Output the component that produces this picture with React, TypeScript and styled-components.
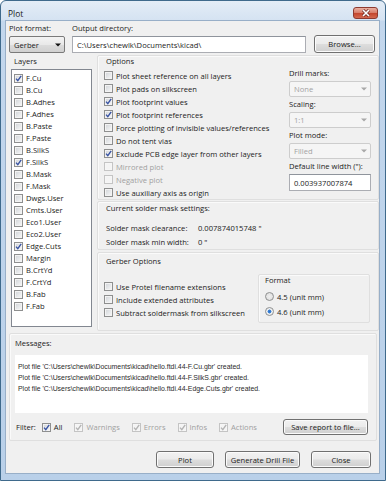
import React from "react";
import styled, { createGlobalStyle } from "styled-components";

/*
 * KICAD "PLOT" DIALOG (WIN7 LOOK)
 */

const GlobalStyle = createGlobalStyle`
  html, body { margin: 0; padding: 0; background: #ffffff; }
  body {
    font-family: "Open Sans", "Liberation Sans", sans-serif;
    font-size: 7.6px;
    color: #1b1b1b;
  }
  * { box-sizing: border-box; }
`;

const layers: [string, boolean][] = [
    ["F.Cu", true], ["B.Cu", false], ["B.Adhes", false], ["F.Adhes", false],
    ["B.Paste", false], ["F.Paste", false], ["B.SilkS", false], ["F.SilkS", true],
    ["B.Mask", false], ["F.Mask", false], ["Dwgs.User", false], ["Cmts.User", false],
    ["Eco1.User", false], ["Eco2.User", false], ["Edge.Cuts", true], ["Margin", false],
    ["B.CrtYd", false], ["F.CrtYd", false], ["B.Fab", false], ["F.Fab", false],
];

const options = [
    { label: "Plot sheet reference on all layers" },
    { label: "Plot pads on silkscreen" },
    { label: "Plot footprint values", checked: true },
    { label: "Plot footprint references", checked: true },
    { label: "Force plotting of invisible values/references" },
    { label: "Do not tent vias" },
    { label: "Exclude PCB edge layer from other layers", checked: true },
    { label: "Mirrored plot", disabled: true },
    { label: "Negative plot", disabled: true },
    { label: "Use auxiliary axis as origin" },
];

const messages = [
    "Plot file 'C:\\Users\\chewlk\\Documents\\kicad\\hello.ftdi.44-F.Cu.gbr' created.",
    "Plot file 'C:\\Users\\chewlk\\Documents\\kicad\\hello.ftdi.44-F.SilkS.gbr' created.",
    "Plot file 'C:\\Users\\chewlk\\Documents\\kicad\\hello.ftdi.44-Edge.Cuts.gbr' created.",
];

const filters = [
    { label: "All", disabled: false },
    { label: "Warnings", disabled: true },
    { label: "Errors", disabled: true },
    { label: "Infos", disabled: true },
    { label: "Actions", disabled: true },
];

const Check = ({ checked, disabled }: { checked?: boolean; disabled?: boolean }) => (
    <Box $disabled={disabled}>
        {checked && (
            <svg width="7" height="7" viewBox="0 0 7 7">
                <path d="M1 3.6 L2.8 5.6 L6.2 0.8" fill="none"
                    stroke={disabled ? "#b4b4b4" : "#3a55a4"} strokeWidth="1.4" />
            </svg>
        )}
    </Box>
);

const Arrow = ({ disabled }: { disabled?: boolean }) => (
    <svg width="6" height="4" viewBox="0 0 6 4">
        <path d="M0 0.5 L6 0.5 L3 3.5 Z" fill={disabled ? "#a8a8a8" : "#111"} />
    </svg>
);

const App = () => {
    return (
        <>
            <GlobalStyle />
            <Window>
                <TitleBar>
                    <Title>Plot</Title>
                    <CloseBtn>
                        <svg width="10" height="8" viewBox="0 0 10 8">
                            <path d="M2 1 L8 7 M8 1 L2 7" stroke="#6b2a22" strokeWidth="3" />
                            <path d="M2 1 L8 7 M8 1 L2 7" stroke="#ffffff" strokeWidth="1.6" />
                        </svg>
                    </CloseBtn>
                </TitleBar>
                <Client>
                    <TopRow>
                        <FormatCol>
                            <FieldLabel>Plot format:</FieldLabel>
                            <Select>
                                <span>Gerber</span>
                                <Arrow />
                            </Select>
                        </FormatCol>
                        <OutputCol>
                            <FieldLabel>Output directory:</FieldLabel>
                            <TextBox>C:\Users\chewlk\Documents\kicad\</TextBox>
                        </OutputCol>
                        <Button $w={61} $h={18} $ml={8}>Browse...</Button>
                    </TopRow>

                    <MainRow>
                        <LayersCol>
                            <FieldLabel $indent={3}>Layers</FieldLabel>
                            <ListBox>
                                {layers.map(([name, on]) => (
                                    <CheckRow key={name} $h={12}>
                                        <Check checked={on} />
                                        {name}
                                    </CheckRow>
                                ))}
                            </ListBox>
                        </LayersCol>

                        <RightCol>
                            <Group>
                                <GroupLabel $top={0}>Options</GroupLabel>
                                <OptionsBody>
                                    <CheckList $pad={1}>
                                        {options.map((o) => (
                                            <CheckRow key={o.label} $h={13} $disabled={o.disabled}>
                                                <Check checked={o.checked} disabled={o.disabled} />
                                                {o.label}
                                            </CheckRow>
                                        ))}
                                    </CheckList>
                                    <SideCol>
                                        <SideField>
                                            <FieldLabel>Drill marks:</FieldLabel>
                                            <Select $disabled>
                                                <span>None</span>
                                                <Arrow disabled />
                                            </Select>
                                        </SideField>
                                        <SideField>
                                            <FieldLabel>Scaling:</FieldLabel>
                                            <Select $disabled>
                                                <span>1:1</span>
                                                <Arrow disabled />
                                            </Select>
                                        </SideField>
                                        <SideField>
                                            <FieldLabel>Plot mode:</FieldLabel>
                                            <Select $disabled>
                                                <span>Filled</span>
                                                <Arrow disabled />
                                            </Select>
                                        </SideField>
                                        <SideField>
                                            <FieldLabel>Default line width ("):</FieldLabel>
                                            <TextBox $h={17}>0.003937007874</TextBox>
                                        </SideField>
                                    </SideCol>
                                </OptionsBody>
                            </Group>

                            <Group $gap={1}>
                                <GroupLabel $top={1}>Current solder mask settings:</GroupLabel>
                                <SolderRows>
                                    <SolderRow><span>Solder mask clearance:</span><span>0.007874015748 "</span></SolderRow>
                                    <SolderRow><span>Solder mask min width:</span><span>0 "</span></SolderRow>
                                </SolderRows>
                            </Group>

                            <Group $gap={2} $bottom={7}>
                                <GroupLabel $top={3}>Gerber Options</GroupLabel>
                                <GerberBody>
                                    <CheckList $pad={6}>
                                        <CheckRow $h={13}><Check />Use Protel filename extensions</CheckRow>
                                        <CheckRow $h={13}><Check />Include extended attributes</CheckRow>
                                        <CheckRow $h={13}><Check />Subtract soldermask from silkscreen</CheckRow>
                                    </CheckList>
                                    <FormatBox>
                                        <FormatLabel>Format</FormatLabel>
                                        <RadioRow><Radio />4.5 (unit mm)</RadioRow>
                                        <RadioRow><Radio $on />4.6 (unit mm)</RadioRow>
                                    </FormatBox>
                                </GerberBody>
                            </Group>
                        </RightCol>
                    </MainRow>

                    <MessagesGroup>
                        <GroupLabel $top={4} $left={0}>Messages:</GroupLabel>
                        <MessageArea>
                            {messages.map((m) => <MessageLine key={m}>{m}</MessageLine>)}
                        </MessageArea>
                        <FilterRow>
                            <FilterTitle>Filter:</FilterTitle>
                            {filters.map((f) => (
                                <CheckRow key={f.label} $h={16} $disabled={f.disabled}>
                                    <Check checked disabled={f.disabled} />
                                    {f.label}
                                </CheckRow>
                            ))}
                            <Spacer />
                            <Button $w={85} $h={16}>Save report to file...</Button>
                        </FilterRow>
                    </MessagesGroup>

                    <ButtonRow>
                        <Button $w={58} $h={17}>Plot</Button>
                        <Button $w={75} $h={17}>Generate Drill File</Button>
                        <Button $w={60} $h={17}>Close</Button>
                    </ButtonRow>
                </Client>
            </Window>
        </>
    );
}

const Window = styled.div`
  width: 386px;
  height: 481px;
  display: flex;
  flex-direction: column;
  border: 1px solid #3f6a8c;
  border-radius: 6px 6px 0 0;
  background: linear-gradient(180deg, #e4edf7 0px, #d5e3f2 19px, #c3d7ed 20px, #b9d0e9 100%);
  overflow: hidden;
`;

const TitleBar = styled.div`
  height: 19px;
  flex: none;
  display: flex;
  align-items: flex-start;
  justify-content: space-between;
  padding: 0 7px 0 7px;
`;

const Title = styled.div`
  margin-top: 7px;
  font-size: 8.4px;
  line-height: 11px;
  color: #1a1a1a;
`;

const CloseBtn = styled.div`
  margin-top: 6px;
  width: 25px;
  height: 12px;
  display: flex;
  align-items: center;
  justify-content: center;
  border: 1px solid #8d3a30;
  border-radius: 3px;
  background: linear-gradient(180deg, #eab1a2 0%, #d9806d 45%, #c4472f 55%, #d4684f 100%);
`;

const Client = styled.div`
  flex: 1;
  margin: 0 5px 6px 4px;
  border: 1px solid #98afc8;
  background: #f0f0f0;
  display: flex;
  flex-direction: column;
`;

const TopRow = styled.div`
  display: flex;
  align-items: flex-end;
  padding: 2px 4px 0 3px;
`;

const FieldLabel = styled.div<{ $indent?: number }>`
  line-height: 11px;
  margin-bottom: 2px;
  padding-left: ${(p) => p.$indent ?? 0}px;
  white-space: nowrap;
`;

const FormatCol = styled.div`
  width: 56px;
  display: flex;
  flex-direction: column;
`;

const OutputCol = styled.div`
  flex: 1;
  margin-left: 7px;
  display: flex;
  flex-direction: column;
`;

const Select = styled.div<{ $disabled?: boolean }>`
  height: ${(p) => (p.$disabled ? 16 : 17)}px;
  display: flex;
  align-items: center;
  justify-content: space-between;
  padding: 0 3px 0 4px;
  border: 1px solid ${(p) => (p.$disabled ? "#cdcdcd" : "#7a7a7a")};
  border-radius: 2px;
  color: ${(p) => (p.$disabled ? "#a3a3a3" : "#1b1b1b")};
  background: ${(p) => (p.$disabled
        ? "#f5f5f5"
        : "linear-gradient(180deg, #f3f3f3 0%, #e9e9e9 50%, #dcdcdc 51%, #d0d0d0 100%)")};
`;

const TextBox = styled.div<{ $h?: number }>`
  height: ${(p) => p.$h ?? 17}px;
  display: flex;
  align-items: center;
  padding-left: 4px;
  background: #ffffff;
  border: 1px solid #abadb3;
  border-top-color: #8f949c;
  white-space: nowrap;
  overflow: hidden;
`;

const Button = styled.div<{ $w: number; $h: number; $ml?: number }>`
  width: ${(p) => p.$w}px;
  height: ${(p) => p.$h}px;
  margin-left: ${(p) => p.$ml ?? 0}px;
  flex: none;
  display: flex;
  align-items: center;
  justify-content: center;
  border: 1px solid #707070;
  border-radius: 3px;
  box-shadow: inset 0 0 0 1px #fbfbfb;
  background: linear-gradient(180deg, #f2f2f2 0%, #ebebeb 48%, #dddddd 52%, #cfcfcf 100%);
  white-space: nowrap;
`;

const MainRow = styled.div`
  display: flex;
  align-items: flex-start;
  margin-top: 2px;
`;

const LayersCol = styled.div`
  width: 81px;
  margin-left: 5px;
  padding-top: 1px;
  display: flex;
  flex-direction: column;
`;

const ListBox = styled.div`
  height: 258px;
  background: #ffffff;
  border: 1px solid #828790;
  padding: 2px 0 0 2px;
`;

const CheckRow = styled.div<{ $h: number; $disabled?: boolean }>`
  height: ${(p) => p.$h}px;
  display: flex;
  align-items: center;
  gap: 3px;
  white-space: nowrap;
  color: ${(p) => (p.$disabled ? "#a0a0a0" : "inherit")};
`;

const Box = styled.span<{ $disabled?: boolean }>`
  flex: none;
  width: 9px;
  height: 9px;
  display: flex;
  align-items: center;
  justify-content: center;
  border: 1px solid ${(p) => (p.$disabled ? "#c4c4c4" : "#8e8f8f")};
  box-shadow: inset 0 0 0 1px ${(p) => (p.$disabled ? "#f6f6f6" : "#f3f3f3")};
  background: ${(p) => (p.$disabled
        ? "#f4f4f4"
        : "linear-gradient(135deg, #cfd2d6 0%, #e6e8ea 55%, #f8f8f8 100%)")};
`;

const RightCol = styled.div`
  flex: 1;
  margin-left: 5px;
  display: flex;
  flex-direction: column;
`;

const Group = styled.div<{ $gap?: number; $bottom?: number }>`
  margin-top: ${(p) => p.$gap ?? 0}px;
  padding-bottom: ${(p) => p.$bottom ?? 0}px;
  border: 1px solid #dfdfdf;
  border-radius: 2px;
  box-shadow: inset 1px 1px 0 #fafafa;
`;

const GroupLabel = styled.div<{ $top: number; $left?: number }>`
  padding: ${(p) => p.$top}px 0 0 ${(p) => p.$left ?? 8}px;
  line-height: 11px;
`;

const OptionsBody = styled.div`
  display: grid;
  grid-template-columns: 185px 82px;
  padding-left: 6px;
  margin-top: 1px;
`;

const CheckList = styled.div<{ $pad: number }>`
  display: flex;
  flex-direction: column;
  padding-top: ${(p) => p.$pad}px;
`;

const SideCol = styled.div`
  display: flex;
  flex-direction: column;
  gap: 2px;
`;

const SideField = styled.div`
  display: flex;
  flex-direction: column;
`;

const SolderRows = styled.div`
  margin-top: 7px;
  padding-left: 8px;
`;

const SolderRow = styled.div`
  height: 14px;
  display: grid;
  grid-template-columns: 92px 1fr;
  align-items: center;
`;

const GerberBody = styled.div`
  display: flex;
  align-items: flex-start;
  justify-content: space-between;
  margin-top: 7px;
  padding: 0 8px 0 6px;
`;

const FormatBox = styled.div`
  width: 112px;
  height: 49px;
  border: 1px solid #dfdfdf;
  border-radius: 2px;
  box-shadow: inset 1px 1px 0 #fafafa;
  padding: 0 0 0 6px;
`;

const FormatLabel = styled.div`
  line-height: 11px;
  margin-bottom: 3px;
`;

const RadioRow = styled.div`
  height: 15px;
  display: flex;
  align-items: center;
  gap: 3px;
`;

const Radio = styled.span<{ $on?: boolean }>`
  width: 9px;
  height: 9px;
  border-radius: 50%;
  border: 1px solid #8e8f8f;
  background: ${(p) => (p.$on
        ? "radial-gradient(circle, #2a6fc9 0%, #3f86d8 35%, #e9ecef 45%, #f5f5f5 100%)"
        : "radial-gradient(circle, #eeeeee 0%, #dcdcdc 100%)")};
`;

const MessagesGroup = styled.div`
  margin: 2px 2px 0 3px;
  padding: 0 8px 5px 5px;
  border: 1px solid #dfdfdf;
  border-radius: 2px;
  box-shadow: inset 1px 1px 0 #fafafa;
`;

const MessageArea = styled.div`
  margin-top: 6px;
  height: 58px;
  background: #ffffff;
  padding: 6px 0 0 3px;
  font-family: "Liberation Sans", Arial, sans-serif;
  font-size: 6.9px;
  color: #2a2a2a;
`;

const MessageLine = styled.div`
  line-height: 11px;
  white-space: nowrap;
`;

const FilterRow = styled.div`
  margin-top: 6px;
  height: 16px;
  display: flex;
  align-items: center;
  gap: 12px;
  padding-left: 1px;
`;

const FilterTitle = styled.span`
  margin-right: -6px;
`;

const Spacer = styled.div`
  flex: 1;
`;

const ButtonRow = styled.div`
  margin-top: 10px;
  display: flex;
  justify-content: flex-end;
  gap: 11px;
  padding-right: 8px;
`;

export default App;
